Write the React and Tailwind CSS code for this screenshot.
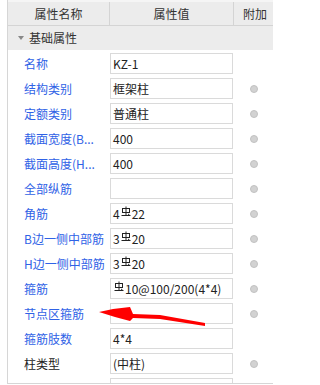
import React from 'react';

const SYM = '§';

const ROWS = [
  { label: '名称', value: 'KZ-1', dot: false },
  { label: '结构类别', value: '框架柱' },
  { label: '定额类别', value: '普通柱' },
  { label: '截面宽度(B...', value: '400' },
  { label: '截面高度(H...', value: '400' },
  { label: '全部纵筋', value: '' },
  { label: '角筋', value: ['4', SYM, '22'] },
  { label: 'B边一侧中部筋', value: ['3', SYM, '20'] },
  { label: 'H边一侧中部筋', value: ['3', SYM, '20'] },
  { label: '箍筋', value: [SYM, '10@100/200(4*4)'] },
  { label: '节点区箍筋', value: '' },
  { label: '箍筋肢数', value: '4*4', dot: false },
  { label: '柱类型', value: '(中柱)', plain: true },
  { label: '', value: '', dot: false },
];

// HRB400 rebar glyph
function Rebar() {
  return (
    <svg width="10" height="11" viewBox="0 0 10 11" className="inline-block -mt-[5px] mx-[1px]" fill="none" stroke="#222" strokeWidth="1">
      <path d="M5 0.5V9" />
      <rect x="1.5" y="2.5" width="7" height="4" />
      <path d="M0.5 9.5H9.5" />
      <path d="M7 8L8.5 9" />
    </svg>
  );
}

function Value({ value }) {
  if (!Array.isArray(value)) return value;
  return value.map((v, i) => (v === SYM ? <Rebar key={i} /> : <span key={i}>{v}</span>));
}

export default function App() {
  return (
    <div className="relative w-[273px] h-[385px] overflow-hidden bg-white text-[12px] text-[#222]"
      style={{ fontFamily: '"Noto Sans CJK SC", "Microsoft YaHei", sans-serif' }}>
      <div className="ml-[7px] h-[384px] border-l border-b border-[#d6d6d6] overflow-hidden flex flex-col">
        {/* header */}
        <div className="flex h-[26px] shrink-0 bg-[#ececec] border-t-2 border-[#f5f5f5] border-b border-b-[#d4d4d4] text-[#333]">
          <div className="w-[102px] shrink-0 border-r border-[#d4d4d4] flex items-center justify-center">属性名称</div>
          <div className="w-[124px] shrink-0 border-r border-[#d4d4d4] flex items-center justify-center">属性值</div>
          <div className="w-[42px] shrink-0 flex items-center justify-center">附加</div>
        </div>

        {/* group */}
        <div className="flex items-center h-[24px] shrink-0 bg-[#ececec] text-[#333]">
          <span className="ml-[10px] mr-[5px] w-0 h-0 border-l-[3px] border-r-[3px] border-t-[4px] border-l-transparent border-r-transparent border-t-[#888]" />
          基础属性
        </div>

        {/* rows */}
        {ROWS.map((r, i) => (
          <div key={i} className="flex h-[25px] shrink-0 pt-[3px]">
            <div className={`w-[102px] shrink-0 pl-[16px] h-[21px] flex items-center whitespace-nowrap ${r.plain ? 'text-[#222]' : 'text-[#2f62e6]'}`}>
              {r.label}
            </div>
            <div className="w-[123px] shrink-0 h-[21px] border border-[#dadada] pl-[2px] flex items-center whitespace-nowrap overflow-hidden">
              <Value value={r.value} />
            </div>
            <div className="w-[42px] shrink-0 h-[21px] flex items-center justify-center">
              {r.dot !== false && (
                <span className="w-[8px] h-[8px] rounded-full bg-[#d2d2d2] border border-[#c2c2c2]" />
              )}
            </div>
          </div>
        ))}
      </div>

      {/* red annotation arrow */}
      <svg className="absolute left-0 top-0 pointer-events-none" width="273" height="385">
        <polygon points="99,312 113,309 130,307 133,314 160,315 205,323 205,326 160,319 133,318 130,321 115,317" fill="#ff0000" />
      </svg>
    </div>
  );
}
